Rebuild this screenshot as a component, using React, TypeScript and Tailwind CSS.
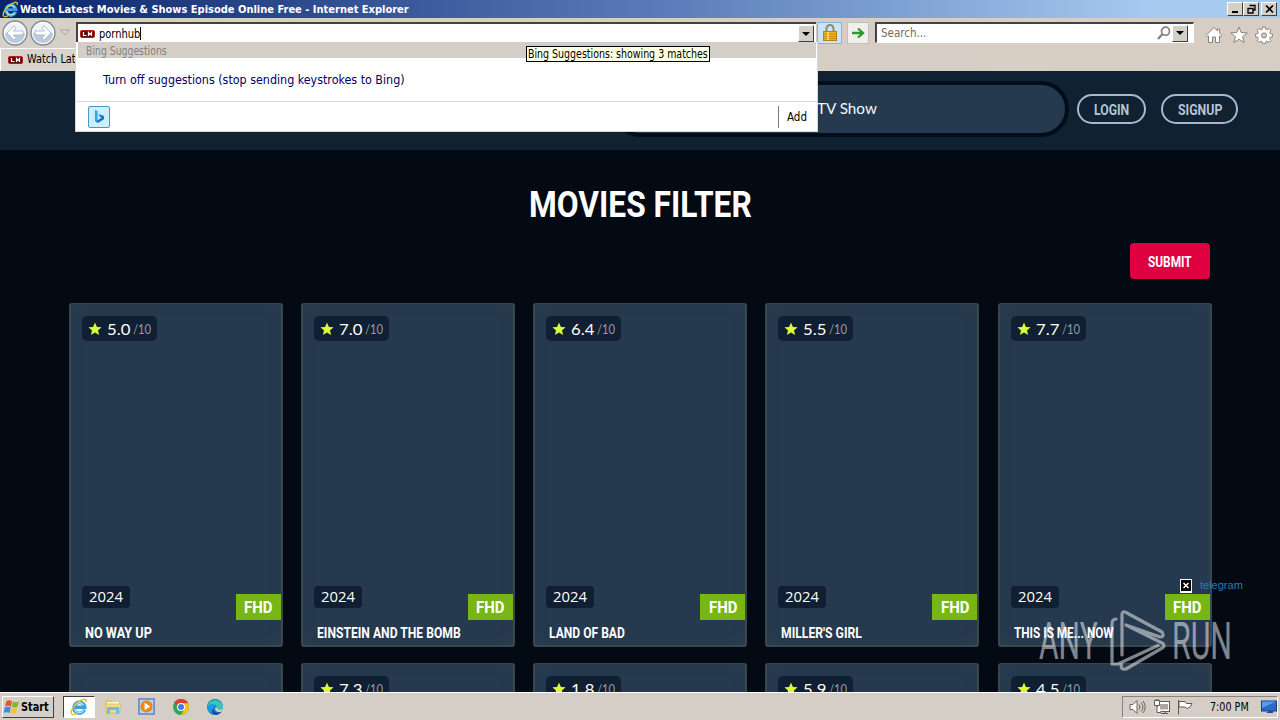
import React, { useLayoutEffect, useRef, useState } from "react";

/** Single-line label stretched to the width of its own box. */
function Fit({ className, children }: { className: string; children: React.ReactNode }) {
  const box = useRef<HTMLSpanElement>(null);
  const text = useRef<HTMLSpanElement>(null);
  const [ratio, setRatio] = useState(1);
  useLayoutEffect(() => {
    if (box.current && text.current) setRatio(box.current.clientWidth / text.current.offsetWidth);
  }, []);
  return (
    <span ref={box} className={`block shrink-0 whitespace-nowrap ${className}`}>
      <span ref={text} className="inline-block origin-left" style={{ transform: `scaleX(${ratio})` }}>
        {children}
      </span>
    </span>
  );
}

const IeLogo = ({ className }: { className: string }) => (
  <svg viewBox="0 0 20 20" className={className}>
    <path d="M16 13A6 6 0 1 1 16.400 10.300H6" fill="none" stroke="#3a9fe0" strokeWidth="3.800" />
    <path d="M15 13.400A5.300 5.300 0 0 1 5.200 12M5.300 8.400A5.400 5.400 0 0 1 15 8" fill="none" stroke="#a5e2fb" strokeWidth="1.700" />
    <path d="M2.500 18.300C-1.500 15 7 4 14.500 1.800c3.200-1 4.200.5 3.200 3" fill="none" stroke="#e9bd26" strokeWidth="1.600" />
    <path d="M2.500 18.300c1.600.8 4-.6 5.500-1.800" fill="none" stroke="#e9bd26" strokeWidth="1.400" />
  </svg>
);

const LmIcon = () => (
  <svg viewBox="0 0 15 8" className="h-2 w-[15px] shrink-0">
    <rect width="15" height="8" rx="2" fill="#b02019" />
    <rect x="1" y="1" width="13" height="6" rx="1" fill="#5c0c0c" />
    <path d="M3.500 2v3.500h3M8.500 6V2.500l1.500 2 1.500-2V6" fill="none" stroke="#fff" strokeWidth="1.200" />
  </svg>
);

const NavArrow = ({ flip }: { flip?: boolean }) => (
  <svg viewBox="0 0 26 26" className={flip ? "size-[26px] -scale-x-100" : "size-[26px]"}>
    <circle cx="13" cy="13" r="12" fill="#e3e8ef" stroke="#858b94" strokeWidth="1.400" />
    <path d="M2.500 13a10.500 10.500 0 0 1 21 0z" fill="#eef3f9" />
    <path d="M2.500 13h21a10.500 10.500 0 0 1-21 0z" fill="#bccadb" />
    <circle cx="13" cy="13" r="10.600" fill="none" stroke="#fff" strokeWidth="1" />
    <path d="M5 13l7-7.200 2.200 2.200-2.800 3H21v4h-9.600l2.800 3-2.200 2.200z" fill="#fff" stroke="#9faec4" strokeWidth=".8" />
  </svg>
);

const DropButton = () => (
  <span className="flex h-[17px] w-4 shrink-0 items-center justify-center border border-t-white border-l-white border-r-[#404040] border-b-[#404040] bg-[#d4d0c8]">
    <svg viewBox="0 0 8 4" className="h-1 w-2"><path d="M0 0h8L4 4z" /></svg>
  </span>
);

function WindowButton({ children }: { children: React.ReactNode }) {
  return (
    <span className="flex h-[14px] w-4 items-center justify-center border border-t-white border-l-white border-r-[#404040] border-b-[#404040] bg-[#d4d0c8]">
      <svg viewBox="0 0 11 10" className="h-[10px] w-[11px]" fill="none" stroke="#000">{children}</svg>
    </span>
  );
}

function TitleBar() {
  return (
    <div className="flex h-[18px] items-center bg-linear-to-r from-[#0a246a] from-0% via-[#5878b6] via-50% to-[#a6caf0] to-90% pr-[3px] pl-[2px]">
      <IeLogo className="size-[17px]" />
      <Fit className="ml-[1px] h-4 w-[389px] text-[11px] leading-[17px] font-bold text-white">
        Watch Latest Movies &amp; Shows Episode Online Free - Internet Explorer
      </Fit>
      <div className="ml-auto flex">
        <WindowButton><path d="M2 8h6" strokeWidth="2" /></WindowButton>
        <WindowButton><path d="M4 1.500h5v4.500h-2M3.500 1.500h6M2 4.500h5v4.500H2zM1.500 4.500h6" strokeWidth="1.300" /></WindowButton>
        <span className="w-[2px]" />
        <WindowButton><path d="M2 1.500l7 7M9 1.500l-7 7" strokeWidth="1.700" /></WindowButton>
      </div>
    </div>
  );
}

function Toolbar() {
  return (
    <div className="flex h-[30px] items-center pb-px pl-[2px]">
      <NavArrow />
      <span className="ml-[2px]"><NavArrow flip /></span>
      <svg viewBox="0 0 10 7" className="ml-1 h-[7px] w-[10px]"><path d="M.5 1h9L5 5.800z" fill="#d9d7d3" stroke="#a9a59f" /></svg>
      <div className="ml-[6px] flex h-[21px] w-[740px] items-center border-t-2 border-l-2 border-[#484040] bg-white pr-[2px] pl-[2px]">
        <LmIcon />
        <Fit className="ml-[4px] h-4 w-[41px] text-[11.500px] leading-4">pornhub</Fit>
        <span className="h-[13px] w-px bg-black" />
        <span className="ml-auto flex"><DropButton /></span>
      </div>
      <div className="ml-[1px] flex h-[22px] w-[25px] items-center justify-center border border-[#7eb4ea] bg-[#cbe3fb]">
        <svg viewBox="0 0 14 17" className="h-[17px] w-[14px]">
          <path d="M3.500 8V4.500a3.500 3.500 0 0 1 7 0V8" fill="none" stroke="#9a8a48" strokeWidth="2" />
          <rect x=".5" y="7.500" width="13" height="9" fill="#eeb21c" stroke="#bb8114" />
          <path d="M1 10h12M1 12.500h12M1 14.500h12" stroke="#c78d13" />
          <path d="M5 8v8" stroke="#ffe177" strokeWidth="1.500" />
        </svg>
      </div>
      <div className="ml-[5px] flex h-[22px] w-[22px] items-center justify-center border border-[#c1bfbb] bg-[#f0efed]">
        <svg viewBox="0 0 14 12" className="h-3 w-[14px]"><path d="M1 6h11M7 1.500L12 6l-5 4.500" fill="none" stroke="#2c972c" strokeWidth="2.300" /></svg>
      </div>
      <div className="ml-[6px] flex h-[21px] w-[319px] items-center border-t-2 border-r border-b border-l-2 border-t-[#48403c] border-r-white border-b-white border-l-[#48403c] bg-white pr-[5px] pl-[4px]">
        <Fit className="h-4 w-[45px] text-[11.500px] leading-[17px] text-[#6d6d6d]">Search...</Fit>
        <svg viewBox="0 0 14 14" className="ml-auto size-[14px]" fill="none" stroke="#85827f">
          <circle cx="8.500" cy="5.200" r="4" strokeWidth="1.700" />
          <path d="M5.500 8L1 13" strokeWidth="2.300" />
        </svg>
        <span className="ml-[1px]"><DropButton /></span>
      </div>
      <div className="ml-[11px] flex items-center gap-[7px] pt-[4px]">
        <svg viewBox="0 0 18 18" className="size-[18px]" fill="#fff" stroke="#88847f" strokeLinejoin="round">
          <path d="M9 1.500L1 9.500l1.500 1.300L3.500 10v6.500h4V11h3v5.500h4V10l1 .8L17 9.500l-2.500-2.400V3h-2v2z" />
        </svg>
        <svg viewBox="0 0 18 18" className="size-[18px]" fill="#fff" stroke="#88847f" strokeLinejoin="round">
          <path d="M9 1l2.200 5.500 6 .4-4.600 3.800 1.500 5.800L9 13.300l-5.100 3.200 1.500-5.800L.8 6.900l6-.4z" />
        </svg>
        <svg viewBox="0 0 18 18" className="size-[18px]" fill="#fff" stroke="#88847f" strokeLinejoin="round">
          <path d="M7.600 1h2.800l.4 2.200 1.400.6L14 2.500l1.900 1.900-1.200 1.900.6 1.400 2.200.4v2.700l-2.200.4-.6 1.400 1.200 1.900-1.900 1.900-1.900-1.200-1.400.6-.3 1.800H7.600l-.4-1.800-1.400-.6L4 16.400l-1.900-1.900 1.200-1.900-.6-1.400-2.200-.4V8.100l2.200-.4.6-1.400-1.200-1.900L4 2.500l1.900 1.300 1.400-.6z" />
          <circle cx="9" cy="9.400" r="2.500" fill="#d4cdc6" />
        </svg>
      </div>
    </div>
  );
}

function SuggestionPanel() {
  return (
    <div className="absolute top-[42px] left-[75px] z-20 flex h-[90px] w-[743px] flex-col border border-t-0 border-[#d6d6d6] bg-white">
      <div className="ml-[2px] flex h-4 w-[738px] items-center bg-[#d3cec7] pl-[8px]">
        <Fit className="h-4 w-[81px] text-[11.500px] leading-[18px] text-[#85817c]">Bing Suggestions</Fit>
      </div>
      <div className="flex h-[43px] items-center pl-[27px]">
        <Fit className="h-5 w-[302px] text-[12.500px] leading-[19px] text-[#000066]">
          Turn off suggestions (stop sending keystrokes to Bing)
        </Fit>
      </div>
      <div className="flex flex-1 items-center border-t border-[#d8d8d8] pl-[12px]">
        <span className="flex size-[22px] items-center justify-center rounded-[2px] border border-[#4699bd] bg-[#cdeffd]">
          <svg viewBox="0 0 12 16" className="h-[15px] w-[11px]">
            <path d="M1 1l3 1v10l-3 1.500z" fill="#36a9ed" />
            <path d="M1 12.500L4 15l7-4V7.500L5 5.200l1.300 3.200L8 9.300 4 12z" fill="#1676d3" />
          </svg>
        </span>
        <span className="mr-[8px] ml-auto h-[22px] w-px bg-[#777]" />
        <Fit className="mr-[10px] h-4 w-[20px] text-[11.500px] leading-[17px]">Add</Fit>
      </div>
      <div className="absolute top-1 left-[450px] flex h-4 w-[184px] items-center border border-black bg-[#ffffe1] pl-[1px]">
        <Fit className="h-4 w-[180px] text-[11.500px] leading-[17px]">Bing Suggestions: showing 3 matches</Fit>
      </div>
    </div>
  );
}

function SiteHeader() {
  return (
    <header className="flex h-[79px] shrink-0 justify-end bg-[#102131] pt-[10px] pr-[42px]">
      <div className="mr-[8px] flex h-[56px] w-[457px] items-center rounded-full border-4 border-[#020d1a] bg-[#25394f] pl-[201px]">
        <Fit className="h-6 w-[60px] font-['Lato',sans-serif] text-[15px] leading-[23px] text-[#f3f7fb]">TV Show</Fit>
      </div>
      <div className="mt-[13px] flex h-[30px] w-[69px] items-center justify-center rounded-full border-2 border-[#a5b9d0] text-[#b5c4d6]">
        <Fit className="h-5 w-[35px] font-['Roboto',sans-serif] text-[14px] leading-[22px] font-bold">LOGIN</Fit>
      </div>
      <div className="mt-[13px] ml-[15px] flex h-[30px] w-[77px] items-center justify-center rounded-full border-2 border-[#a5b9d0] text-[#b5c4d6]">
        <Fit className="h-5 w-[44px] font-['Roboto',sans-serif] text-[14px] leading-[22px] font-bold">SIGNUP</Fit>
      </div>
    </header>
  );
}

function Rating({ value }: { value: string }) {
  return (
    <div className="flex h-[25px] w-[75px] items-center rounded-[5px] bg-[#101f31] pl-[6px] font-['Lato',sans-serif]">
      <svg viewBox="0 0 14 14" className="size-[14px]">
        <path d="M7 .5l1.900 4.400 4.700.4-3.600 3.100 1.100 4.700L7 10.600l-4.100 2.500L4 8.400.4 5.300l4.700-.4z" fill="#dcfb36" />
      </svg>
      <Fit className="ml-[5px] h-6 w-[23px] text-[16px] leading-[23px] text-white">{value}</Fit>
      <Fit className="ml-[3px] h-6 w-[18px] text-[12.500px] leading-[25px] text-[#8f9dac]">/10</Fit>
    </div>
  );
}

function Card({ rating, title, width }: { rating?: string; title?: string; width?: string }) {
  return (
    <article className="flex h-[344px] w-[214px] flex-col rounded-[3px] border-2 border-t border-[#39474f] bg-[#25394f] pt-[12px] pl-[11px] shadow-[inset_0_0_12px_#2f3f49]">
      <div className="h-[25px]">{rating && <Rating value={rating} />}</div>
      {title && (
        <>
          <div className="mt-[245px] flex h-[34px] items-start justify-between">
            <span className="flex h-[22px] w-[48px] items-center justify-center rounded-[4px] bg-[#101f31]">
              <Fit className="h-5 w-[34px] font-['Open_Sans',sans-serif] text-[14px] leading-5 text-white">2024</Fit>
            </span>
            <span className="mt-[8px] flex h-[26px] w-[45px] items-center justify-center bg-[#78b616]">
              <Fit className="h-6 w-[28px] font-['Roboto',sans-serif] text-[17px] leading-[25px] font-bold text-white">FHD</Fit>
            </span>
          </div>
          <div className="mt-[3px] pl-[3px]">
            <Fit className={`h-5 font-['Roboto',sans-serif] text-[14px] leading-[21px] font-bold text-white ${width}`}>{title}</Fit>
          </div>
        </>
      )}
    </article>
  );
}

const MOVIES = [
  { rating: "5.0", title: "NO WAY UP", width: "w-[67px]" },
  { rating: "7.0", title: "EINSTEIN AND THE BOMB", width: "w-[144px]" },
  { rating: "6.4", title: "LAND OF BAD", width: "w-[76px]" },
  { rating: "5.5", title: "MILLER'S GIRL", width: "w-[81px]" },
  { rating: "7.7", title: "THIS IS ME... NOW", width: "w-[100px]" },
];
const NEXT_ROW = [undefined, "7.3", "1.8", "5.9", "4.5"];

function Watermark() {
  return (
    <div className="absolute top-[537px] left-[1039px] flex h-[66px] items-center opacity-50">
      <Fit className="h-[60px] w-[59px] font-['Roboto',sans-serif] text-[52px] leading-[62px] text-white">ANY</Fit>
      <svg viewBox="0 0 60 66" className="ml-[10px] h-[66px] w-[60px]" fill="none" stroke="#fff" strokeWidth="3.200" strokeLinejoin="round" strokeLinecap="round">
        <path d="M8 11Q4 11 4 16V56h6L50 37.500M14 47V6Q15 2.500 18 4.500L54 24Q57 29 52 29L18 17L55 35.500Q57 38 55 39.500L18 61Q12 62 13.500 56.500" />
      </svg>
      <Fit className="ml-[4px] h-[60px] w-[60px] font-['Roboto',sans-serif] text-[52px] leading-[62px] text-white">RUN</Fit>
    </div>
  );
}

function Taskbar() {
  return (
    <footer className="relative z-10 flex h-[28px] items-center border-t border-white bg-[#d5cec7] pl-[2px]">
      <div className="flex h-[22px] w-[52px] items-center border border-t-white border-l-white border-r-[#404040] border-b-[#404040] bg-[#d4d0c8] pl-[1px]">
        <svg viewBox="0 0 16 16" className="size-4">
          <path d="M2.500 2Q5 .5 8 2.200L7 7.500Q4 6 1 7.500z" fill="#e4572b" />
          <path d="M9 2.500q3 1.300 6 0l-1.500 5.300q-3 1.400-5.700 0z" fill="#7cba36" />
          <path d="M.8 8.600q3-1.500 6 0L5.600 14q-3-1.600-6 0z" fill="#3d8cd8" />
          <path d="M7.600 9q3 1.400 5.800 0l-1.500 5.200q-2.700 1.600-5.400 0z" fill="#f5c32e" />
        </svg>
        <Fit className="ml-[1px] h-4 w-[28px] text-[12px] leading-[17px] font-bold">Start</Fit>
      </div>
      <div className="ml-[9px] flex h-[22px] w-[32px] items-center justify-center border border-t-[#404040] border-r-white border-b-white border-l-[#404040] bg-white">
        <IeLogo className="size-[18px]" />
      </div>
      <svg viewBox="0 0 18 18" className="ml-[9px] size-[18px]">
        <path d="M2 4V2h6l1 2h7v6H2z" fill="#e6c65e" />
        <path d="M3 4h12v6H3z" fill="#fdf6cf" />
        <path d="M1.500 6h15l-1 9h-13z" fill="#f2dc86" stroke="#d0b04c" strokeWidth=".6" />
        <path d="M3 9h12v7h-3v-4H6v4H3z" fill="#71bde0" />
      </svg>
      <svg viewBox="0 0 18 18" className="ml-[16px] size-[17px]">
        <rect x="1" y="1" width="16" height="16" fill="#b7d5f2" stroke="#4280c4" strokeWidth="1.400" />
        <circle cx="9" cy="9" r="6.500" fill="#f08518" />
        <path d="M7 5l6 4-6 4z" fill="#fff" />
      </svg>
      <svg viewBox="0 0 16 16" className="ml-[18px] size-4">
        <circle cx="8" cy="8" r="8" fill="#33a457" />
        <path d="M8 8L1.100 4A8 8 0 0 1 15 4.200z" fill="#e33b2e" />
        <path d="M8 4.200h7A8 8 0 0 1 8 16l3.500-6z" fill="#fbc116" />
        <circle cx="8" cy="8" r="4" fill="#fff" /><circle cx="8" cy="8" r="3" fill="#3f7ee8" />
      </svg>
      <svg viewBox="0 0 16 16" className="ml-[18px] size-4">
        <circle cx="8" cy="8" r="8" fill="#1479ca" />
        <path d="M.2 8A8 8 0 0 1 16 7.500c0 3-2.500 4-5 3.500-1.500-.3-1-1.500-.6-2.500C10 5.500 3 4 .2 8z" fill="#39c6b4" />
        <path d="M.2 8C2 4 8.500 4 9.800 8c-4-1-5 3.500-2 6C3 14.500 0 11 .2 8z" fill="#1b9be2" />
        <path d="M10.500 8.500c-.8 1.800 1 2.500 3 2.200 1.200-.2 2-.8 2.500-1.400-.3 1.400-.8 2.400-1.400 3.200-2.500 1.300-6.200.4-6.600-2.500 0-1 .8-2 2.500-1.500z" fill="#d5cec7" />
        <path d="M6 10c0 4 5.500 5 8.800 2.500C12 16.500 6 17 4.800 12z" fill="#124a96" />
      </svg>
      <div className="mr-[2px] ml-auto flex h-[22px] w-[156px] items-center border border-t-[#88847e] border-r-white border-b-white border-l-[#88847e] pl-[6px]">
        <svg viewBox="0 0 17 16" className="h-4 w-[17px]" fill="none" stroke="#69655f">
          <path d="M1 5.500h3l4-4v13l-4-4H1z" fill="#fff" />
          <path d="M10 5.500q2 2.500 0 5M12 3.500q4 4.500 0 9M14 2q4.500 6 0 12" />
        </svg>
        <svg viewBox="0 0 16 16" className="ml-[8px] size-4" fill="#fff" stroke="#5e5a55">
          <rect x="3.500" y="2.500" width="12" height="10" /><rect x="6" y="5" width="8" height="5.500" fill="#aaa59e" stroke="none" />
          <path d="M7 14.500h7M11 12.500v2M.5 1.500h5v5h-5zM2 0v2M4 0v2M3 7v6.500h4" />
        </svg>
        <svg viewBox="0 0 16 16" className="ml-[7px] size-4" fill="#fff" stroke="#5e5a55">
          <path d="M1.500 1v14.500M2 2.500h6l1.500 2h5.500q-2 5-5 5L8 8H2z" />
        </svg>
        <Fit className="ml-[17px] h-4 w-[39px] text-[11.500px] leading-[17px]">7:00 PM</Fit>
        <svg viewBox="0 0 16 14" className="ml-[12px] h-[14px] w-4">
          <rect x=".5" y="1" width="15" height="10" fill="#2e69c8" stroke="#183c84" />
          <path d="M1 1.500h14L1 8z" fill="#5b9bee" /><path d="M8 11h4v2H5z" fill="#1c4b9b" />
        </svg>
      </div>
    </footer>
  );
}

export default function App() {
  return (
    <div className="relative flex h-[720px] w-[1280px] flex-col overflow-hidden bg-[#030a14] font-['DejaVu_Sans_Condensed','DejaVu_Sans',sans-serif] text-black">
      <div className="h-[71px] shrink-0 bg-linear-to-r from-[#d5d0c8] to-[#d7cdc3]">
        <TitleBar />
        <Toolbar />
        <div className="flex h-[23px] w-[76px] items-center overflow-hidden border-t border-l border-white bg-[#d9d3cb] pl-[7px]">
          <LmIcon />
          <span className="ml-[4px]"><Fit className="h-4 w-[49px] text-[11.500px] leading-[15px]">Watch Lat</Fit></span>
        </div>
      </div>
      <SuggestionPanel />
      <main className="relative flex h-[621px] shrink-0 flex-col overflow-hidden">
        <SiteHeader />
        <h1 className="mt-[32px] flex h-[44px] justify-center">
          <Fit className="h-[44px] w-[223px] font-['Roboto',sans-serif] text-[37px] leading-[45px] font-bold text-white">MOVIES FILTER</Fit>
        </h1>
        <div className="mt-[17px] flex justify-end pr-[70px]">
          <button className="flex h-[36px] w-[80px] items-center justify-center rounded-[4px] bg-[#df0041]">
            <Fit className="h-5 w-[44px] text-left font-['Roboto',sans-serif] text-[14px] leading-[22px] font-bold text-white">SUBMIT</Fit>
          </button>
        </div>
        <div className="mt-[24px] grid grid-cols-[repeat(5,214px)] gap-x-[18.200px] gap-y-[16px] pl-[68.750px]">
          {MOVIES.map((m) => <Card key={m.title} {...m} />)}
          {NEXT_ROW.map((r, i) => <Card key={i} rating={r} />)}
        </div>
        <div className="absolute top-[507px] left-[1180px] flex items-center gap-[8px]">
          <svg viewBox="0 0 12 14" className="h-[14px] w-3">
            <path d="M0 0h12v14H0z" fill="#fff" /><path d="M1 1h10v11H1z" />
            <path d="M3.500 4l5 5M8.500 4l-5 5" stroke="#fff" strokeWidth="1.500" />
          </svg>
          <Fit className="h-4 w-[43px] font-['Liberation_Sans',sans-serif] text-[11px] leading-[14px] text-[#297ab8]">telegram</Fit>
        </div>
        <Watermark />
      </main>
      <Taskbar />
    </div>
  );
}
